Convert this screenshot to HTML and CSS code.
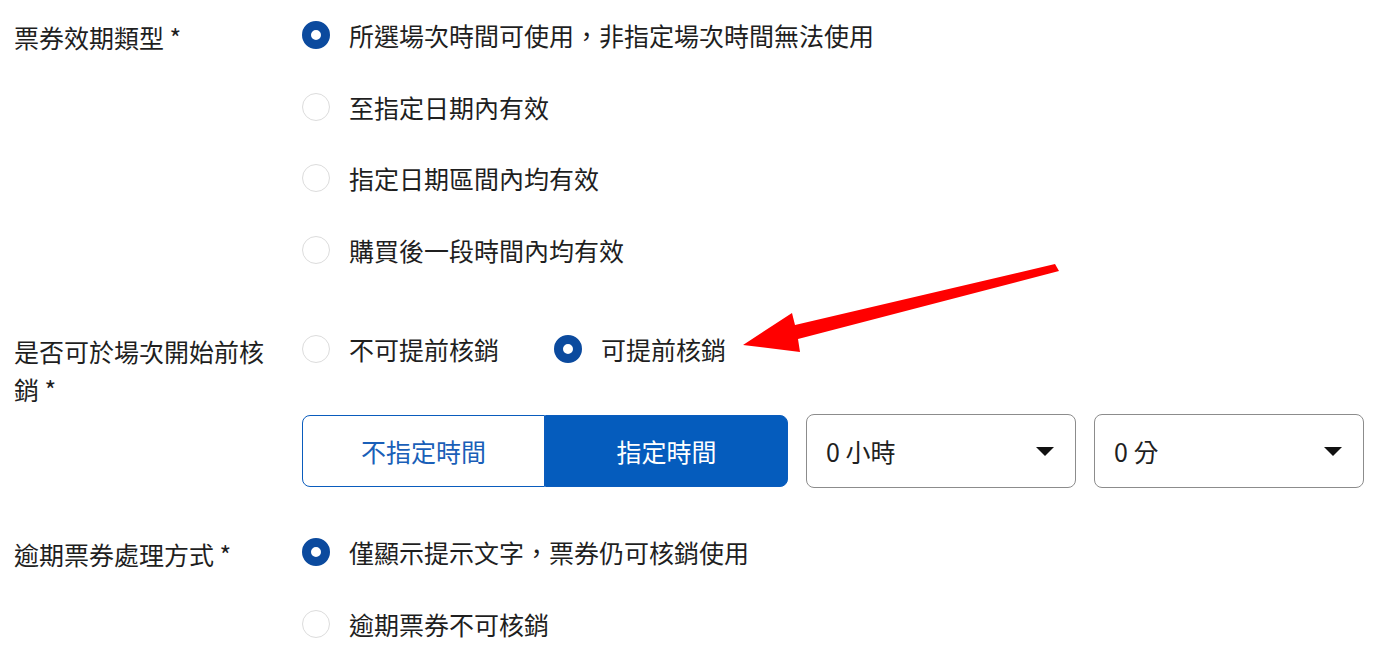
FILE: index.html
```html
<!DOCTYPE html>
<html lang="zh-Hant">
<head>
<meta charset="utf-8">
<link rel="stylesheet" href="styles.css">
</head>
<body>
<div class="form">
  <div class="field field-first">
    <div class="label">票券效期類型 *</div>
    <div class="options">
      <label class="opt"><span class="radio checked"></span><span>所選場次時間可使用，非指定場次時間無法使用</span></label>
      <label class="opt"><span class="radio"></span><span>至指定日期內有效</span></label>
      <label class="opt"><span class="radio"></span><span>指定日期區間內均有效</span></label>
      <label class="opt"><span class="radio"></span><span>購買後一段時間內均有效</span></label>
    </div>
  </div>

  <div class="field field-second">
    <div class="label">是否可於場次開始前核銷 *</div>
    <div class="content">
      <div class="inline-options">
        <label class="opt"><span class="radio"></span><span>不可提前核銷</span></label>
        <label class="opt"><span class="radio checked"></span><span>可提前核銷</span></label>
      </div>
      <div class="controls">
        <div class="toggle">
          <button class="seg">不指定時間</button>
          <button class="seg active">指定時間</button>
        </div>
        <div class="select"><span>0 小時</span><span class="caret"></span></div>
        <div class="select"><span>0 分</span><span class="caret"></span></div>
      </div>
    </div>
  </div>

  <div class="field field-third">
    <div class="label">逾期票券處理方式 *</div>
    <div class="options">
      <label class="opt"><span class="radio checked"></span><span>僅顯示提示文字，票券仍可核銷使用</span></label>
      <label class="opt"><span class="radio"></span><span>逾期票券不可核銷</span></label>
    </div>
  </div>
</div>

<svg class="arrow" width="1388" height="662" viewBox="0 0 1388 662">
  <polygon points="1055,264 795,325 792,313 743,345 800,352 798,339 1059,271" fill="#ff0000"/>
</svg>
</body>
</html>
```

FILE: styles.css
```css
html, body {
  margin: 0;
  padding: 0;
  background: #ffffff;
}
body {
  font-family: "Noto Sans CJK TC", "Noto Sans", sans-serif;
  color: #1f1f1f;
  font-size: 25px;
  position: relative;
  width: 1388px;
  height: 662px;
  overflow: hidden;
}
.form {
  padding-left: 14px;
}
.field {
  display: grid;
  grid-template-columns: 288px 1fr;
}
.field-first { padding-top: 17px; }
.field-second { margin-top: 63px; }
.field-third { margin-top: 46px; }

.label {
  width: 262px;
  line-height: 38px;
  padding-top: 1px;
}
.options {
  display: flex;
  flex-direction: column;
  gap: 35.7px;
}
.opt {
  display: flex;
  align-items: center;
  height: 36px;
  line-height: 36px;
  gap: 19px;
}
.radio {
  box-sizing: border-box;
  width: 28px;
  height: 28px;
  border-radius: 50%;
  border: 1px solid #dcdcdc;
  background: #fff;
  flex: none;
}
.radio.checked {
  border: 9px solid #0b4a9e;
}
.content {
  display: flex;
  flex-direction: column;
}
.inline-options {
  display: flex;
  gap: 55px;
}
.controls {
  display: flex;
  align-items: center;
  gap: 18px;
  margin-top: 47px;
}
.toggle {
  display: flex;
  width: 486px;
  height: 72px;
}
.seg {
  flex: 1;
  font-family: inherit;
  font-size: 25px;
  border: 1px solid #0a5cbd;
  background: #fff;
  color: #1a5fb8;
  padding: 0;
  margin: 0;
}
.seg:first-child {
  border-radius: 8px 0 0 8px;
}
.seg.active {
  background: #055cbd;
  color: #fff;
  border-radius: 0 8px 8px 0;
}
.select {
  box-sizing: border-box;
  width: 270px;
  height: 74px;
  border: 1px solid #8c8c8c;
  border-radius: 8px;
  display: flex;
  align-items: center;
  justify-content: space-between;
  padding: 0 21px 0 19px;
  color: #1f1f1f;
}
.caret {
  width: 0;
  height: 0;
  border-left: 9px solid transparent;
  border-right: 9px solid transparent;
  border-top: 9px solid #111;
}
.arrow {
  position: absolute;
  left: 0;
  top: 0;
  pointer-events: none;
}
```
